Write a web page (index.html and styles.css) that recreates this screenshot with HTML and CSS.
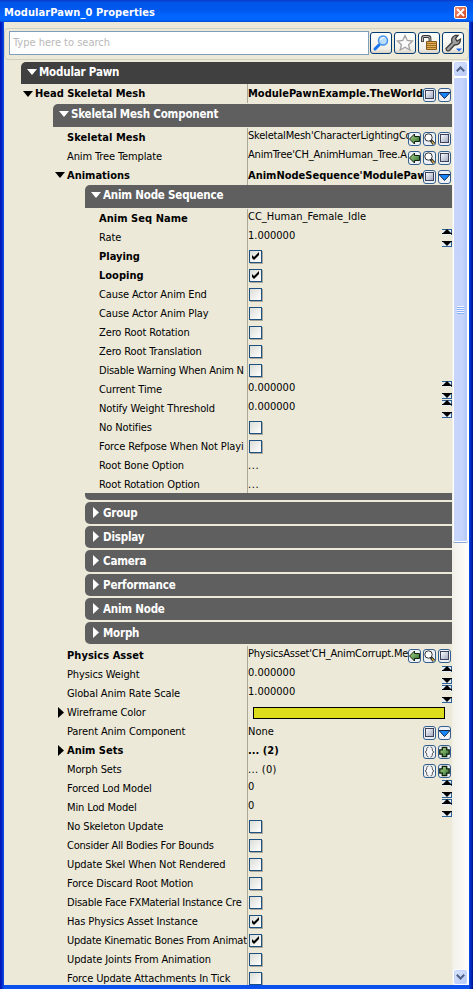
FILE: index.html
```
<!DOCTYPE html>
<html lang="en">
<head>
<meta charset="utf-8">
<title>ModularPawn_0 Properties</title>
<link rel="stylesheet" href="styles.css">
</head>
<body>
<svg class="defs" width="0" height="0">
<defs>
<linearGradient id="face" x1="0" y1="0" x2="1" y2="1"><stop offset="0" stop-color="#fff"/><stop offset="1" stop-color="#9ca5bd"/></linearGradient>
<linearGradient id="leaf" x1="0" y1="0" x2="1" y2="1"><stop offset="0" stop-color="#b7e08d"/><stop offset="1" stop-color="#25632c"/></linearGradient>
</defs>
<symbol id="box" viewBox="0 0 11 12"><rect x="1.500" y="1.500" width="8" height="8" fill="url(#face)" stroke="#3e4259"/></symbol>
<symbol id="drop" viewBox="0 0 11 12"><path d="M0 3.500h11L5.500 9.500z" fill="#1688ff" stroke="#10254a"/></symbol>
<symbol id="back" viewBox="0 0 11 12"><path d="M.5 6l5-5v2.500h5v5h-5V11z" fill="url(#leaf)" stroke="#10220f"/></symbol>
<symbol id="find" viewBox="0 0 11 12"><path d="M7 7.500l3 3.500" stroke="#222" stroke-width="3"/><circle cx="4.500" cy="4.500" r="3.700" fill="#fff" stroke="#333"/><path d="M7.800 8.500l2.200 2.500" stroke="#d1af47" stroke-width="1.300"/></symbol>
<symbol id="clear" viewBox="0 0 11 12"><path d="M4.500 1C2 1 3 4 2.500 5L1 6l1.500 1C3 8 2 11 4.500 11M6.500 1C9 1 8 4 8.500 5L10 6 8.500 7C8 8 9 11 6.500 11" fill="#fff" stroke="#555"/></symbol>
<symbol id="add" viewBox="0 0 11 12"><path d="M3.300 1.300h4.400v2.500h2.500v4.400H7.700v2.500H3.300V8.200H.8V3.800h2.500z" fill="url(#leaf)" stroke="#10220f" stroke-width="1.300"/></symbol>
<symbol id="tick" viewBox="0 0 11 11"><path d="M2 4v3l2 2 5-5V1L4 6z" fill="#000"/></symbol>
<symbol id="spin" viewBox="0 0 10 18"><path d="M0 0h10v6H0zM0 12h10v6H0z" fill="#e6edf2"/><path d="M0 .5h10M0 17.500h10M9.500 0v6M9.500 12v6" stroke="#2c6095"/><path d="M5 0l4 4h1v1H0V4h1zM0 12h10v1H9l-4 4-4-4H0z" fill="#000"/></symbol>
</svg>
<div class="window">
<header class="title"><span>ModularPawn_0 Properties</span><button class="close"><svg viewBox="0 0 9 9"><path d="M1 1l7 7M8 1L1 8" stroke="#fff" stroke-width="1.800"/></svg></button></header>
<div class="client">
<div class="toolbar">
<input placeholder="Type here to search">
<button><svg viewBox="0 0 20 20"><path d="M4 16l4-4" stroke="#1474f0" stroke-width="3" stroke-linecap="round"/><circle cx="12" cy="7.500" r="4.500" fill="#b8defc" stroke="#4591e8" stroke-width="1.500"/><path d="M9.500 7q1-3 4-2.500" stroke="#fff" fill="none"/></svg></button>
<button><svg viewBox="0 0 20 20"><path d="M10 2.500l2.300 5 5.200.6-3.900 3.600 1.200 5.300-4.800-2.800L5.200 17l1.200-5.300-3.900-3.600 5.200-.6z" fill="#fbfbfb" stroke="#a2a2a2" stroke-width="1.300"/></svg></button>
<button><svg viewBox="0 0 20 20"><path d="M3.500 9V5q0-1.500 1.500-1.500h4q2 0 2 2v3" fill="none" stroke="#333" stroke-width="2.800"/><path d="M3.500 8.300V5q0-1.500 1.500-1.500h4q2 0 2 2v3" fill="none" stroke="#bbb" stroke-width="1"/><path d="M7.500 8.500h10v8h-10z" fill="#dfae50" stroke="#86561b"/><path d="M8 10.500h9M8 12.500h9M8 14.500h9" stroke="#a06d25"/></svg></button>
<button><svg viewBox="0 0 20 20"><path d="M3 15.500l6-6q-1.500-5 3-7h3l-2.500 3 1.500 2.500 3.500-2q0 6-6 6l-5 5.500q-3 1.500-3.500-2z" fill="#a0a0a0" stroke="#3c3c3c" stroke-width="1.300"/><path d="M13 15.500h6l-3 3z" fill="#2563e8"/></svg></button>
</div>
<div class="body">
<main class="tree">
<div class="bar root"><i class="tri down"></i>Modular Pawn</div>
<div class="row b l0"><div class="name"><i class="tri down"></i>Head Skeletal Mesh</div><div class="val"><span>ModulePawnExample.TheWorld</span><div class="acts"><svg><use href="#box"/></svg><svg><use href="#drop"/></svg></div></div></div>
<div class="bar comp"><i class="tri down"></i>Skeletal Mesh Component</div>
<div class="row b l1 asset"><div class="name">Skeletal Mesh</div><div class="val up"><span>SkeletalMesh'CharacterLightingCo</span><div class="acts"><svg><use href="#back"/></svg><svg><use href="#find"/></svg><svg><use href="#box"/></svg></div></div></div>
<div class="row l1"><div class="name">Anim Tree Template</div><div class="val up"><span>AnimTree'CH_AnimHuman_Tree.A</span><div class="acts"><svg><use href="#back"/></svg><svg><use href="#find"/></svg><svg><use href="#box"/></svg></div></div></div>
<div class="row b l1"><div class="name"><i class="tri down"></i>Animations</div><div class="val"><span>AnimNodeSequence'ModulePaw</span><div class="acts"><svg><use href="#box"/></svg><svg><use href="#drop"/></svg></div></div></div>
<div class="bar seq"><i class="tri down"></i>Anim Node Sequence</div>
<div class="row b l2 asset"><div class="name">Anim Seq Name</div><div class="val up"><span class="num">CC_Human_Female_Idle</span></div></div>
<div class="row l2"><div class="name">Rate</div><div class="val up"><span class="num">1.000000</span><svg class="spin"><use href="#spin"/></svg></div></div>
<div class="row b l2"><div class="name">Playing</div><div class="val"><i class="check"><svg><use href="#tick"/></svg></i></div></div>
<div class="row b l2"><div class="name">Looping</div><div class="val"><i class="check"><svg><use href="#tick"/></svg></i></div></div>
<div class="row l2"><div class="name">Cause Actor Anim End</div><div class="val"><i class="check"></i></div></div>
<div class="row l2"><div class="name">Cause Actor Anim Play</div><div class="val"><i class="check"></i></div></div>
<div class="row l2"><div class="name">Zero Root Rotation</div><div class="val"><i class="check"></i></div></div>
<div class="row l2"><div class="name">Zero Root Translation</div><div class="val"><i class="check"></i></div></div>
<div class="row l2"><div class="name snug">Disable Warning When Anim N</div><div class="val"><i class="check"></i></div></div>
<div class="row l2"><div class="name">Current Time</div><div class="val up"><span class="num">0.000000</span><svg class="spin"><use href="#spin"/></svg></div></div>
<div class="row l2"><div class="name">Notify Weight Threshold</div><div class="val up"><span class="num">0.000000</span><svg class="spin"><use href="#spin"/></svg></div></div>
<div class="row l2"><div class="name">No Notifies</div><div class="val"><i class="check"></i></div></div>
<div class="row l2"><div class="name">Force Refpose When Not Playi</div><div class="val"><i class="check"></i></div></div>
<div class="row l2"><div class="name">Root Bone Option</div><div class="val"><span class="dots">...</span></div></div>
<div class="row l2 last"><div class="name">Root Rotation Option</div><div class="val"><span class="dots">...</span></div></div>
<div class="foot"></div>
<div class="bar shut"><i class="tri right"></i>Group</div>
<div class="bar shut"><i class="tri right"></i>Display</div>
<div class="bar shut"><i class="tri right"></i>Camera</div>
<div class="bar shut"><i class="tri right"></i>Performance</div>
<div class="bar shut"><i class="tri right"></i>Anim Node</div>
<div class="bar shut"><i class="tri right"></i>Morph</div>
<div class="row b l1 asset"><div class="name">Physics Asset</div><div class="val up"><span>PhysicsAsset'CH_AnimCorrupt.Me</span><div class="acts"><svg><use href="#back"/></svg><svg><use href="#find"/></svg><svg><use href="#box"/></svg></div></div></div>
<div class="row l1"><div class="name">Physics Weight</div><div class="val up"><span class="num">0.000000</span><svg class="spin"><use href="#spin"/></svg></div></div>
<div class="row l1"><div class="name">Global Anim Rate Scale</div><div class="val up"><span class="num">1.000000</span><svg class="spin"><use href="#spin"/></svg></div></div>
<div class="row l1"><div class="name"><i class="tri right"></i>Wireframe Color</div><div class="val"><div class="swatch"></div></div></div>
<div class="row l1"><div class="name">Parent Anim Component</div><div class="val"><span>None</span><div class="acts"><svg><use href="#box"/></svg><svg><use href="#drop"/></svg></div></div></div>
<div class="row b l1"><div class="name"><i class="tri right"></i>Anim Sets</div><div class="val"><span>... (2)</span><div class="acts"><svg><use href="#clear"/></svg><svg><use href="#add"/></svg></div></div></div>
<div class="row l1"><div class="name">Morph Sets</div><div class="val"><span class="wide">... (0)</span><div class="acts"><svg><use href="#clear"/></svg><svg><use href="#add"/></svg></div></div></div>
<div class="row l1"><div class="name">Forced Lod Model</div><div class="val up"><span>0</span><svg class="spin"><use href="#spin"/></svg></div></div>
<div class="row l1"><div class="name">Min Lod Model</div><div class="val up"><span>0</span><svg class="spin"><use href="#spin"/></svg></div></div>
<div class="row l1"><div class="name">No Skeleton Update</div><div class="val"><i class="check"></i></div></div>
<div class="row l1"><div class="name snug">Consider All Bodies For Bounds</div><div class="val"><i class="check"></i></div></div>
<div class="row l1"><div class="name">Update Skel When Not Rendered</div><div class="val"><i class="check"></i></div></div>
<div class="row l1"><div class="name">Force Discard Root Motion</div><div class="val"><i class="check"></i></div></div>
<div class="row l1"><div class="name snug">Disable Face FXMaterial Instance Cre</div><div class="val"><i class="check"></i></div></div>
<div class="row l1"><div class="name">Has Physics Asset Instance</div><div class="val"><i class="check"><svg><use href="#tick"/></svg></i></div></div>
<div class="row l1"><div class="name snug">Update Kinematic Bones From Animat</div><div class="val"><i class="check"><svg><use href="#tick"/></svg></i></div></div>
<div class="row l1"><div class="name">Update Joints From Animation</div><div class="val"><i class="check"></i></div></div>
<div class="row l1"><div class="name">Force Update Attachments In Tick</div><div class="val"><i class="check"></i></div></div>
</main>
<aside class="scroll">
<div class="sbtn"><svg viewBox="0 0 9 6"><path d="M.8 5.200L4.500 1.500l3.700 3.700" fill="none" stroke="#4d6185" stroke-width="2"/></svg></div>
<div class="thumb"><i></i></div>
<div class="sbtn end"><svg viewBox="0 0 9 6"><path d="M.8.800l3.700 3.700L8.200.8" fill="none" stroke="#4d6185" stroke-width="2"/></svg></div>
</aside>
</div>
</div>
</div>
</body>
</html>
```
FILE: styles.css
```
* { box-sizing: border-box; }
body { margin: 0; font: 11px "DejaVu Sans Condensed", "DejaVu Sans", sans-serif; font-stretch: condensed; color: #000; overflow: hidden; }
.defs { position: absolute; }
.window { width: 473px; height: 989px; background: #ece9d8; display: flex; flex-direction: column; border: solid #0046e0; border-width: 0 4px 4px; border-image: linear-gradient(90deg, #0019b8 0, #0019b8 1px, #0a50ec 4px, #0a50ec 469px, #0036d4 470px, #00138c 473px) 0 4 4; }
.title { flex: none; height: 22px; margin: 0 -4px; padding: 2px 6px 0 4px; display: flex; align-items: center; justify-content: space-between; font-size: 11px; font-weight: bold; letter-spacing: .08px; color: #fff; background: linear-gradient(#0a3fcd 0, #0a3fcd 1px, #0055e8 2px, #0058ee 10px, #0066ff 16px, #0066ff 20px, #0048d0 22px); }
.title span { white-space: nowrap; }
.close { width: 13px; height: 13px; padding: 1px; display: grid; border: 1px solid #fff; border-radius: 2px; background: linear-gradient(135deg, #ee8f72, #d3401b); }
.client { flex: 1; min-height: 0; display: flex; flex-direction: column; }
.toolbar { flex: none; height: 32px; margin: 6px 0 0 0; padding: 2px 4px 0; display: flex; gap: 2px; border: 1px solid #d0d0bf; border-radius: 4px; }
.toolbar input { width: 360px; height: 24px; margin-right: -1px; border: 1px solid #7f9db9; padding: 0 3px 2px; font: inherit; background: #fff; }
.toolbar input::placeholder { color: #b9b9b9; opacity: 1; }
.toolbar button { flex: none; width: 22px; height: 22px; margin-top: 1px; padding: 0; display: grid; border: 1px solid #003c74; border-radius: 3px; background: linear-gradient(#fff, #f0efe8 80%, #d9d3c6); }
.body { flex: 1; min-height: 0; display: flex; padding-top: 1px; }
.tree { width: 448px; margin-top: 1px; overflow: hidden; }
.bar { position: relative; height: 22px; padding-left: 18px; line-height: 21px; font-size: 11.5px; letter-spacing: -.2px; font-weight: bold; color: #fff; background: #5f5f5f; border-radius: 5px 0 0 0; white-space: nowrap; }
.root { margin-left: 17px; background: #404040; }
.comp { margin: 1px 0 1px 49px; height: 23px; }
.seq { margin: 0 0 1px 81px; height: 23px; }
.shut { margin: 2px 0 0 81px; line-height: 23px; border-radius: 5px 0 0 5px; }
.foot { height: 7px; margin-left: 81px; background: #5f5f5f; border-radius: 0 0 0 5px; }
.shut + .row { margin-top: 2px; }
.row { height: 19px; display: flex; line-height: 19px; }
.last { height: 18px; }
.name { position: relative; width: 244px; height: 100%; flex: none; letter-spacing: -.12px; white-space: nowrap; overflow: hidden; border-right: 1px solid #aca899; }
.snug { letter-spacing: -.24px; }
.l0 .name { padding-left: 31px; }
.l1 .name { padding-left: 63px; }
.l2 .name { padding-left: 95px; }
.b .name, .b .val { font-weight: bold; letter-spacing: 0; }
.asset .name { letter-spacing: .05px; }
.val { position: relative; flex: 1; min-width: 0; display: flex; align-items: center; }
.val span { width: 100%; white-space: nowrap; overflow: hidden; }
.up span { margin-top: -4px; letter-spacing: -.2px; }
.b.asset .val { font-weight: normal; }
.up .num { letter-spacing: 0; }
.val .dots { letter-spacing: .6px; }
.val .wide { letter-spacing: .3px; }
.tri { position: absolute; }
.down { width: 10px; height: 6px; background: currentColor; clip-path: polygon(0 0, 100% 0, 50% 100%); left: 6px; top: 7px; }
.right { width: 6px; height: 11px; background: currentColor; clip-path: polygon(0 0, 100% 50%, 0 100%); left: 8px; top: 5px; }
.l0 .down { left: 19px; }
.l1 .down { left: 51px; top: 6px; }
.l1 .right { left: 54px; top: 4px; }
.acts { position: absolute; right: 1px; top: 4px; display: flex; gap: 2px; }
.shut + .row .acts { top: 3px; }
.acts svg { width: 13px; height: 14px; border: 1px solid #335e8d; border-radius: 3px; background: #edf1f5; }
.spin { position: absolute; right: 0; top: 1px; width: 10px; height: 18px; }
.check { width: 13px; height: 13px; margin-left: 1px; border: 1px solid #1c5180; background: linear-gradient(135deg, #dcdcd7, #fff); box-shadow: 1px 1px #aaa89d; }
.check svg { display: block; width: 11px; height: 11px; }
.swatch { width: 192px; height: 12px; margin-left: 5px; border: 1px solid #000; background: #dddd1b; }
.scroll { width: 17px; display: flex; flex-direction: column; background: linear-gradient(90deg, #f1f0e8, #fefefb); }
.sbtn { flex: none; width: 15px; height: 16px; margin-left: 1px; display: grid; place-items: center; border: 1px solid #fff; border-radius: 3px; background: linear-gradient(135deg, #dce6fe, #b4c8f6); box-shadow: inset 0 0 0 1px #c3d3fd; }
.sbtn svg { width: 9px; height: 6px; }
.end { margin-top: auto; }
.thumb { width: 15px; height: 465px; margin-left: 1px; display: grid; place-items: center; border: 1px solid #fff; border-radius: 2px; background: linear-gradient(90deg, #c8d6fb, #c4d3fc 65%, #b2c9f7); box-shadow: 0 1px #8da7dc; }
.thumb i { width: 7px; height: 8px; background: repeating-linear-gradient(#f2f6ff 0 1px, #8cb0f8 1px 2px); }
```
